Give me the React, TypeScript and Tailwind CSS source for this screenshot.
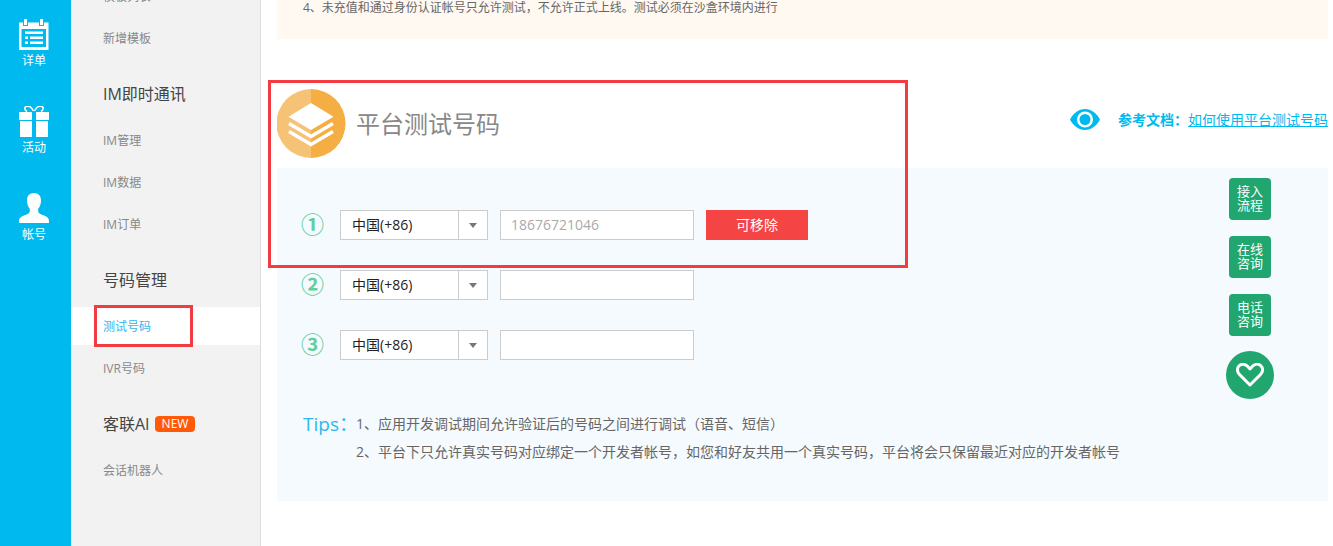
const railItems = [
  { label: '详单', icon: <CalendarIcon /> },
  { label: '活动', icon: <GiftIcon /> },
  { label: '帐号', icon: <UserIcon /> },
]

function CalendarIcon() {
  return (
    <svg width="30" height="31" viewBox="0 0 30 31" fill="#fff">
      <rect x="5" y="0" width="3" height="6" />
      <rect x="21" y="0" width="3" height="6" />
      <path d="M0 3.500h4v3.500h5v-3.500h11v3.500h5v-3.500h4.500v27.500h-29.500zM2.500 10v18h24.500v-18z" fillRule="evenodd" />
      <rect x="6" y="12.500" width="18" height="2.500" />
      <rect x="6" y="17.500" width="3" height="2.500" />
      <rect x="11" y="17.500" width="13" height="2.500" />
      <rect x="6" y="22.500" width="3" height="2.500" />
      <rect x="11" y="22.500" width="13" height="2.500" />
    </svg>
  )
}

function GiftIcon() {
  return (
    <svg width="30" height="31" viewBox="0 0 30 31" fill="#fff">
      <path d="M14.500 5c-2-4-5-5.500-7.500-4.500-2 .8-1.500 3.500 1 5" fill="none" stroke="#fff" strokeWidth="1.500" />
      <path d="M15.500 5c2-4 5-5.500 7.500-4.500 2 .8 1.500 3.500-1 5" fill="none" stroke="#fff" strokeWidth="1.500" />
      <rect x="0" y="6" width="13" height="8" />
      <rect x="17" y="6" width="13" height="8" />
      <rect x="1" y="15" width="12" height="16" />
      <rect x="17" y="15" width="12" height="16" />
    </svg>
  )
}

function UserIcon() {
  return (
    <svg width="30" height="31" viewBox="0 0 30 31" fill="#fff">
      <path d="M15 0c4.500 0 7 2.800 7 7.500 0 3.300-1.100 6.500-2.800 8.300v2.500c0 1.500 1.300 2.500 3.800 3.400 3.700 1.300 7 2.400 7 6.300v2h-30v-2c0-3.900 3.300-5 7-6.300 2.500-.9 3.800-1.900 3.800-3.400v-2.500c-1.700-1.800-2.800-5-2.800-8.300 0-4.700 2.500-7.500 7-7.500z" />
    </svg>
  )
}

function LayersLogo() {
  return (
    <svg width="69" height="69" viewBox="0 0 69 69" className="shrink-0">
      <path d="M34 0a34.500 34.500 0 0 0 0 69z" fill="#f6c276" />
      <path d="M34 0a34.500 34.500 0 0 1 0 69z" fill="#f4ae43" />
      <path d="M34 14l22.500 13.700-22.500 13.300-22.500-13.300z" fill="#fff" />
      <path d="M12 34.500l22 13 22-13M12 42.500l22 13 22-13" fill="none" stroke="#fff" strokeWidth="3.500" />
    </svg>
  )
}

function EyeIcon() {
  return (
    <svg width="30" height="21" viewBox="0 0 30 21" fill="#00b9ef">
      <path d="M15 0c6.500 0 11.800 4.300 15 10.500-3.200 6.200-8.500 10.500-15 10.500s-11.800-4.300-15-10.500c3.200-6.200 8.500-10.500 15-10.500zM15 2.500a8 8 0 1 0 0 16 8 8 0 0 0 0-16z" fillRule="evenodd" />
      <circle cx="15" cy="10.500" r="5.500" />
    </svg>
  )
}

function NavItem({ label, active }: { label: string; active?: boolean }) {
  return (
    <div className={active ? 'mb-1 flex h-[38px] items-center bg-white pt-[2px] pl-[32px] text-xs text-[#2fb6ee]' : 'mb-1 flex h-[38px] items-center pt-[2px] pl-[32px] text-xs text-[#888]'}>
      {label}
    </div>
  )
}

function NavTitle({ children }: { children: React.ReactNode }) {
  return <div className="mt-[21px] mb-[11px] flex h-[32px] items-center gap-[5px] pl-[32px] text-base text-[#444]">{children}</div>
}

function PhoneRow({ mark, value, removable }: { mark: string; value?: string; removable?: boolean }) {
  return (
    <div className="flex h-[30px] items-center">
      <span className="mb-[2px] w-[63px] pl-[24px] text-[23px] leading-none font-bold text-[#5fcf9b]">{mark}</span>
      <div className="flex h-[30px] w-[148px] border border-[#ccc] bg-white text-sm text-[#222]">
        <span className="flex w-[118px] items-center border-r border-[#ccc] pl-[11px]">中国(+86)</span>
        <span className="flex flex-1 items-center justify-center">
          <span className="h-0 w-0 border-x-[4px] border-t-[5px] border-x-transparent border-t-[#777]" />
        </span>
      </div>
      <div className="ml-[12px] flex h-[30px] w-[194px] items-center border border-[#ccc] bg-white pl-[10px] text-sm text-[#aaa]">{value}</div>
      {removable && <button className="ml-[12px] h-[30px] w-[102px] bg-[#f44444] text-sm text-white">可移除</button>}
    </div>
  )
}

function SideButton({ label }: { label: string }) {
  return (
    <div className="flex h-[42px] w-[42px] items-center justify-center rounded bg-[#21a66f] pb-[2px] text-center text-[13px] leading-[14px] text-white">
      <span className="w-[26px]">{label}</span>
    </div>
  )
}

export default function App() {
  return (
    <div className="relative flex h-[546px] w-[1333px] overflow-hidden bg-white font-['Open_Sans','Noto_Sans_CJK_SC',sans-serif]">
      <aside className="w-[71px] shrink-0 bg-[#00b9ef] pt-[19px] pr-[3px]">
        {railItems.map((item) => (
          <div key={item.label} className="flex h-[87px] flex-col items-center text-xs text-white">
            {item.icon}
            <span className="mt-[3px]">{item.label}</span>
          </div>
        ))}
      </aside>

      <nav className="w-[190px] shrink-0 border-r border-[#ddd] bg-[#f2f2f2] pt-px">
        <div className="-mt-[24px]">
          <NavItem label="模板列表" />
          <NavItem label="新增模板" />
          <NavTitle>IM即时通讯</NavTitle>
          <NavItem label="IM管理" />
          <NavItem label="IM数据" />
          <NavItem label="IM订单" />
          <NavTitle>号码管理</NavTitle>
          <NavItem label="测试号码" active />
          <NavItem label="IVR号码" />
          <NavTitle>
            客联AI
            <span className="rounded-sm bg-[#ff5a0a] px-[7px] text-xs leading-[16px] text-white">NEW</span>
          </NavTitle>
          <NavItem label="会话机器人" />
        </div>
      </nav>

      <main className="ml-[16px] w-[1051px] shrink-0">
        <div className="h-[39px] bg-[#fff9f2] pl-[26px] text-xs leading-[15px] text-[#666]">
          4、未充值和通过身份认证帐号只允许测试，不允许正式上线。测试必须在沙盒环境内进行
        </div>

        <header className="mt-[50px] flex h-[79px] items-start justify-between">
          <div className="flex items-center gap-[10px]">
            <LayersLogo />
            <h1 className="text-2xl font-normal text-[#888]">平台测试号码</h1>
          </div>
          <div className="mt-[20px] flex items-center text-sm text-[#00b9ef]">
            <EyeIcon />
            <span className="ml-[18px] font-bold">参考文档：</span>
            <a className="underline">如何使用平台测试号码</a>
          </div>
        </header>

        <section className="h-[333px] bg-[#f5fafe] pt-[42px]">
          <div className="flex flex-col gap-[30px]">
            <PhoneRow mark="①" value="18676721046" removable />
            <PhoneRow mark="②" />
            <PhoneRow mark="③" />
          </div>
          <div className="mt-[50px] flex pl-[26px] text-sm leading-[28px] text-[#666]">
            <span className="w-[53px] text-[19px] leading-[28px] font-normal text-[#2fb6ee]">Tips：</span>
            <div>
              <p>1、应用开发调试期间允许验证后的号码之间进行调试（语音、短信）</p>
              <p>2、平台下只允许真实号码对应绑定一个开发者帐号，如您和好友共用一个真实号码，平台将会只保留最近对应的开发者帐号</p>
            </div>
          </div>
        </section>
      </main>

      <div className="absolute top-[178px] left-[1226px] flex w-[48px] flex-col items-center gap-[16px]">
        <SideButton label="接入流程" />
        <SideButton label="在线咨询" />
        <SideButton label="电话咨询" />
        <div className="-mt-px flex h-[48px] w-[48px] items-center justify-center rounded-full bg-[#21a66f]">
          <svg width="28" height="24" viewBox="0 0 28 24" fill="none" stroke="#fff" strokeWidth="3" strokeLinejoin="round">
            <path d="M14 22l-10.500-10.500c-2.700-2.800-2.700-6.700-.2-8.800 2.600-2.200 6.200-1.500 8.200.6l2.500 2.700 2.500-2.700c2-2.100 5.600-2.800 8.200-.6 2.500 2.100 2.500 6 -.2 8.800z" />
          </svg>
        </div>
      </div>

      <div className="absolute top-[80px] left-[268px] h-[188px] w-[640px] border-[3px] border-[#f33c3f]" />
      <div className="absolute top-[305px] left-[94px] h-[42px] w-[99px] border-[3px] border-[#f33c3f]" />
    </div>
  )
}
